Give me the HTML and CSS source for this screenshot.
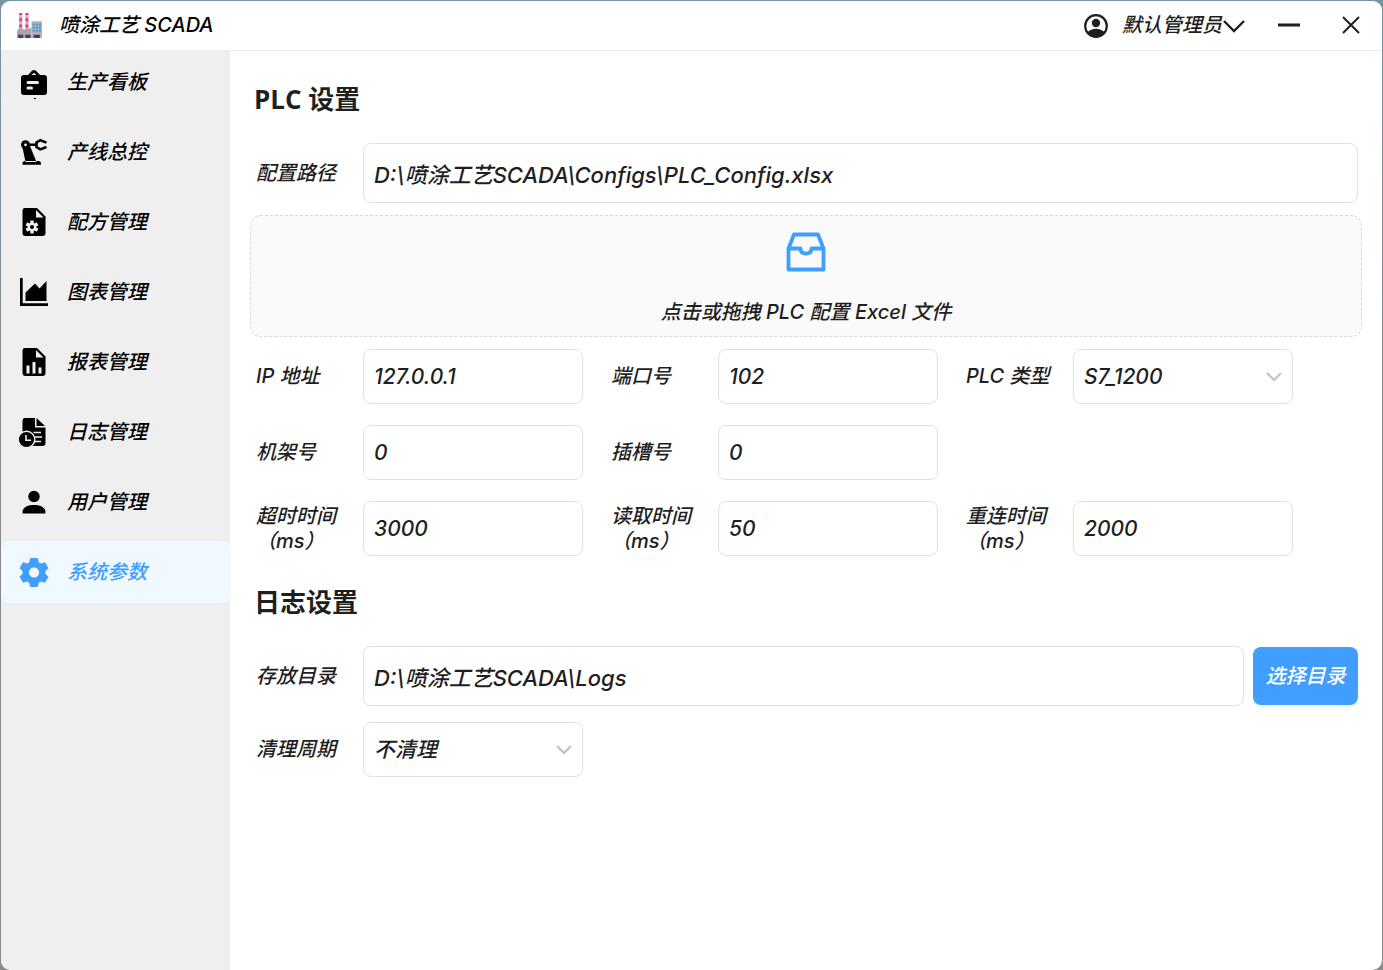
FILE: index.html
```html
<!DOCTYPE html>
<html lang="zh-CN">
<head>
<meta charset="utf-8">
<meta name="viewport" content="width=device-width, initial-scale=1">
<title>喷涂工艺 SCADA</title>
<link rel="stylesheet" href="styles.css">
</head>
<body>
<div class="window">
  <header class="titlebar">
    <svg class="logo" viewBox="0 0 26 26" aria-hidden="true">
      <path fill="#c9b8c4" d="M3 1h3v17H3zM9 1h3v17H9z"/>
      <path fill="#f0417f" d="M3 1h3v2H3zM3 6h3v3H3zM3 12h3v3H3zM9 1h3v2H9zM9 6h3v3H9zM9 12h3v3H9z"/>
      <path fill="#aaa3b5" d="M1 18l2-2h3l2 1 3-1h3l1-2v11H1z"/>
      <path fill="#b4aebf" d="M15 9h10v16H15z"/>
      <path fill="#35a3cf" d="M16 11h2v2h-2zM19 11h2v2h-2zM22 11h2v2h-2zM16 14h2v2h-2zM19 14h2v2h-2zM22 14h2v2h-2zM16 17h2v2h-2zM19 17h2v2h-2zM22 17h2v2h-2z"/>
      <path fill="#4a4058" d="M2 22h5v3H2zM9 22h5v3H9zM17 22h6v3h-6z"/>
    </svg>
    <span class="app-name">喷涂工艺 SCADA</span>
    <button class="account" type="button">
      <svg class="icon-account" viewBox="0 0 24 24" aria-hidden="true"><circle cx="12" cy="12" r="10.8" fill="none" stroke="currentColor" stroke-width="2.2"/><circle cx="12" cy="9" r="4.2" fill="currentColor"/><path fill="currentColor" d="M3.4 18.2C5.6 16 8.7 14.8 12 14.8s6.400 1.200 8.600 3.400A10.600 10.600 0 0 1 12 23a10.600 10.600 0 0 1-8.600-4.800z"/></svg>
      <span>默认管理员</span>
      <svg class="icon-down" viewBox="0 0 24 16" aria-hidden="true"><path d="M2 3l10 10L22 3" fill="none" stroke="currentColor" stroke-width="2.400"/></svg>
    </button>
    <button class="window-button" type="button" aria-label="最小化"><svg viewBox="0 0 22 22" aria-hidden="true"><path d="M0 10h22" stroke="currentColor" stroke-width="3"/></svg></button>
    <button class="window-button" type="button" aria-label="关闭"><svg viewBox="0 0 22 22" aria-hidden="true"><path d="M3 2l16 16M19 2L3 18" stroke="currentColor" stroke-width="2"/></svg></button>
  </header>
  <div class="body">
    <nav class="sidebar">
      <a class="nav-item" href="#board"><svg viewBox="0 0 30 30" aria-hidden="true"><path fill="currentColor" fill-rule="evenodd" d="M5 8h4l4-4.200q2-1.600 4 0L21 8h4q3 0 3 3v14q0 3-3 3H5q-3 0-3-3V11q0-3 3-3zm7.500 0h5L15 5.800zM9 14q-1.500 0-1.500 1.500T9 17h9.500q1.500 0 1.500-1.500T18.500 14zM9 19.500Q7.500 19.500 7.500 21T9 22.500h3.500Q14 22.500 14 21t-1.500-1.500z"/><path fill="currentColor" d="M15 31h2v1h-2z"/></svg><span>生产看板</span></a>
      <a class="nav-item" href="#line"><svg viewBox="0 0 30 30" aria-hidden="true"><path fill="currentColor" d="M3.500 10.500L6.500 25h11L11 9zM3.500 27.800v-1.300q0-2.500 2.500-2.500h13.500q2.500 0 2.500 2.500v1.300z"/><circle cx="6.500" cy="7.800" r="4.500" fill="currentColor"/><circle cx="6.500" cy="7.800" r="1.400" fill="#efefef"/><path d="M9 7.800h8M27.500 5.600L21.300 3.200 17.500 5.500v4.600l3.800 2.300 6.200-2.400" fill="none" stroke="currentColor" stroke-width="2.600"/></svg><span>产线总控</span></a>
      <a class="nav-item" href="#recipe"><svg viewBox="0 0 30 30" aria-hidden="true"><path fill="currentColor" d="M6 1h12l8.500 8.500V26q0 3-3 3H6.500q-3 0-3-3V4q0-3 2.500-3z"/><path fill="#efefef" d="M17 3v7.500h7.500z"/><g stroke="#efefef" stroke-width="3.400"><path d="M13 13.500v13M7.400 16.800l11.200 6.500M7.400 23.300l11.200-6.500"/></g><circle cx="13" cy="20" r="4.400" fill="#efefef"/><circle cx="13" cy="20" r="2" fill="currentColor"/></svg><span>配方管理</span></a>
      <a class="nav-item" href="#chart"><svg viewBox="0 0 30 30" aria-hidden="true"><path fill="currentColor" d="M1 1h2.700v25.300H29V29H1zM6.500 15.500L16 6.500l4.500 5L27.500 4v20h-21z"/></svg><span>图表管理</span></a>
      <a class="nav-item" href="#report"><svg viewBox="0 0 30 30" aria-hidden="true"><path fill="currentColor" d="M6 1h12l8.500 8.500V26q0 3-3 3H6.500q-3 0-3-3V4q0-3 2.500-3z"/><path fill="#efefef" d="M17 3v7.500h7.500zM7.500 18.500h3v8h-3zM13.500 15h3v11.500h-3zM19.500 20.500h3v6h-3z"/></svg><span>报表管理</span></a>
      <a class="nav-item" href="#log"><svg viewBox="0 0 30 30" aria-hidden="true"><path fill="currentColor" d="M6 1h10v9.500h10.500V26q0 3-3 3h-17q-3 0-3-3V4q0-3 2.500-3zM17.500 1l8.500 8h-8.500z"/><path stroke="#efefef" stroke-width="1.600" d="M14.500 15.500h7.500M16 20h7M15.500 24.500h6.500"/><circle cx="7.500" cy="22.500" r="8.300" fill="currentColor" stroke="#efefef" stroke-width="1.400"/><path d="M7 18v5.200h5" fill="none" stroke="#efefef" stroke-width="1.600"/></svg><span>日志管理</span></a>
      <a class="nav-item" href="#users"><svg viewBox="0 0 30 30" aria-hidden="true"><circle cx="15" cy="9.500" r="5.700" fill="currentColor"/><path fill="currentColor" d="M3.600 26.500v-2.800C5 19.500 10 18 15 18s10 1.500 11.400 5.700v2.800z"/></svg><span>用户管理</span></a>
      <a class="nav-item nav-item-active" href="#settings" aria-current="page"><svg viewBox="0 0 30 30" aria-hidden="true"><path fill="currentColor" fill-rule="evenodd" stroke="currentColor" stroke-width="1" stroke-linejoin="round" d="M11.500 1.500h7l.8 4 2.700 1.600 3.800-1.400 3.200 5.600-3 2.600v3.200l3 2.600-3.200 5.600-3.800-1.400-2.700 1.600-.8 4h-7l-.8-4L8 23.900l-3.800 1.400L1 19.700l3-2.600v-3.200l-3-2.600 3.200-5.600L8 7.100l2.700-1.600zM15 10a5.500 5.500 0 1 0 .01 0z"/></svg><span>系统参数</span></a>
    </nav>
    <main class="content">
      <section>
        <h2 class="section-title">PLC 设置</h2>
        <div class="row">
          <label class="label" for="config-path">配置路径</label>
          <input class="control control-tall" id="config-path" type="text" value="D:\喷涂工艺SCADA\Configs\PLC_Config.xlsx">
        </div>
        <button class="upload" type="button">
          <svg viewBox="0 0 40 40" aria-hidden="true"><path fill="none" stroke="#409eff" stroke-width="3.800" stroke-linejoin="round" d="M2.500 16.500L8 2.500h24l5.500 14v21h-35zM2.500 16.500h12c0 3.500 2.400 5 5.500 5s5.500-1.500 5.500-5h12"/></svg>
          <span>点击或拖拽 PLC 配置 Excel 文件</span>
        </button>
        <div class="fields">
          <div class="field"><label class="label" for="ip">IP 地址</label><input class="control" id="ip" type="text" value="127.0.0.1"></div>
          <div class="field"><label class="label" for="port">端口号</label><input class="control" id="port" type="text" value="102"></div>
          <div class="field"><label class="label" for="plc-type">PLC 类型</label><div class="select"><select class="control" id="plc-type"><option>S7_1200</option></select><svg viewBox="0 0 16 10" aria-hidden="true"><path d="M1 1l7 7 7-7"/></svg></div></div>
          <div class="field field-first"><label class="label" for="rack">机架号</label><input class="control" id="rack" type="text" value="0"></div>
          <div class="field"><label class="label" for="slot">插槽号</label><input class="control" id="slot" type="text" value="0"></div>
          <div class="field field-first"><label class="label" for="timeout">超时时间（ms）</label><input class="control" id="timeout" type="text" value="3000"></div>
          <div class="field"><label class="label" for="read">读取时间（ms）</label><input class="control" id="read" type="text" value="50"></div>
          <div class="field"><label class="label" for="reconnect">重连时间（ms）</label><input class="control" id="reconnect" type="text" value="2000"></div>
        </div>
      </section>
      <section class="log-section">
        <h2 class="section-title">日志设置</h2>
        <div class="row">
          <label class="label" for="log-path">存放目录</label>
          <input class="control control-tall" id="log-path" type="text" value="D:\喷涂工艺SCADA\Logs">
          <button class="primary" type="button">选择目录</button>
        </div>
        <div class="fields fields-log">
          <div class="field"><label class="label" for="cleanup">清理周期</label><div class="select"><select class="control" id="cleanup"><option>不清理</option></select><svg viewBox="0 0 16 10" aria-hidden="true"><path d="M1 1l7 7 7-7"/></svg></div></div>
        </div>
      </section>
    </main>
  </div>
</div>
</body>
</html>
```

FILE: styles.css
```css
* {
  box-sizing: border-box;
}

body {
  margin: 0;
  background: linear-gradient(#7893a5, #8a8a8a 40%);
  color: #1f1f1f;
  font: italic 500 20px/25px Inter, "Noto Sans CJK SC", sans-serif;
}

button,
input,
select {
  color: inherit;
  font: inherit;
}

button {
  border: 0;
  background: none;
  cursor: pointer;
}

.window {
  display: flex;
  flex-direction: column;
  min-height: 100vh;
  border: 1px solid transparent;
  border-bottom: 0;
  border-radius: 10px;
  background: #fff padding-box;
  overflow: hidden;
}

.titlebar {
  display: flex;
  align-items: center;
  height: 50px;
  padding: 0 20px 0 15px;
  border-bottom: 1px solid #ececec;
}

.logo {
  width: 27px;
  height: 27px;
  margin-right: 16px;
}

.app-name {
  margin-right: auto;
  color: #000;
}

.account {
  display: flex;
  align-items: center;
  padding: 0;
  margin-right: 32px;
}

.icon-account {
  width: 24px;
  height: 24px;
  margin-right: 14px;
}

.icon-down {
  width: 24px;
  height: 16px;
}

.window-button {
  display: flex;
  padding: 0;
}

.window-button + .window-button {
  margin-left: 40px;
}

.window-button svg {
  width: 22px;
  height: 22px;
}

.body {
  display: flex;
  flex: 1;
}

.sidebar {
  display: flex;
  flex: none;
  flex-direction: column;
  gap: 8px;
  width: 229px;
  background: #efefef;
}

.nav-item {
  display: flex;
  align-items: center;
  gap: 18px;
  height: 62px;
  padding-left: 18px;
  border-radius: 8px;
  color: #000;
  text-decoration: none;
}

.nav-item svg {
  width: 30px;
  height: 30px;
  overflow: visible;
}

.nav-item-active {
  background: #f0f9ff;
  color: #409eff;
}

.content {
  flex: 1;
  min-width: 0;
  padding: 28px 20px 20px;
}

.section-title {
  margin: 0 4px 24px;
  font: bold 26px/40px "Open Sans", "Noto Sans CJK SC", sans-serif;
}

.row {
  display: flex;
  align-items: center;
  padding: 0 4px 0 6px;
}

.label {
  flex: none;
  width: 107px;
  padding-right: 20px;
}

.control {
  width: 220px;
  height: 55px;
  padding: 0 10px;
  border: 1px solid #e2e2e2;
  border-radius: 8px;
  background: #fff;
  font-size: 21px;
  outline: 0;
  appearance: none;
}

.control-tall {
  flex: 1;
  min-width: 0;
  height: 60px;
  font-size: 22px;
}

.upload {
  display: flex;
  flex-direction: column;
  align-items: center;
  gap: 28px;
  width: 100%;
  height: 122px;
  padding: 16px 0 0;
  margin: 12px 0;
  border: 1px dashed #d9d9d9;
  border-radius: 10px;
  background: #fafafa;
}

.upload svg {
  width: 40px;
  height: 40px;
}

.fields {
  display: grid;
  grid-template-columns: repeat(auto-fill, 327px);
  gap: 21px 28px;
  padding-left: 6px;
}

.fields-log {
  margin-top: 16px;
}

.field {
  display: flex;
  align-items: center;
  height: 55px;
}

.field-first {
  grid-column-start: 1;
}

.select {
  position: relative;
}

.select svg {
  position: absolute;
  top: 23px;
  right: 11px;
  width: 16px;
  height: 10px;
  fill: none;
  stroke: #c0c0c0;
  stroke-width: 2;
  pointer-events: none;
}

.log-section {
  margin-top: 26px;
}

.primary {
  width: 105px;
  height: 58px;
  padding: 0;
  margin-left: 9px;
  border-radius: 8px;
  background: #409eff;
  box-shadow: 0 2px 0 #ecf5ff;
  color: #fff;
}
```
